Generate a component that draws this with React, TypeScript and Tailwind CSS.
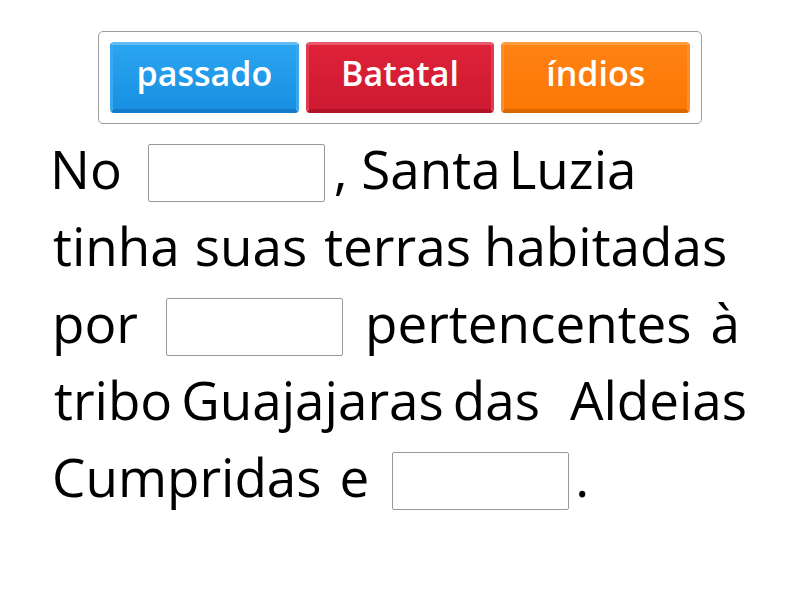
import React from 'react'

function Tile({ label, tone }: { label: string, tone: 'blue' | 'red' | 'orange' }) {
  const tones = {
    blue: 'bg-gradient-to-b from-[#2aa5f0] to-[#1990e2] border-t-[#63bbf3] border-x-[#3aa8ee] border-b-[#137ccb]',
    red: 'bg-gradient-to-b from-[#de2239] to-[#cd1a30] border-t-[#e7596a] border-x-[#e23a4f] border-b-[#b11327]',
    orange: 'bg-gradient-to-b from-[#ff8212] to-[#fb7805] border-t-[#ff9d45] border-x-[#ff8d2a] border-b-[#dc6600]',
  }
  return (
    <div className={`flex h-[71px] w-[189px] items-center justify-center rounded-[4px] border-[3px] border-b-[4px] pb-[7px] text-[34px] font-semibold text-white ${tones[tone]}`}>
      {label}
    </div>
  )
}

function Blank() {
  return <span className="mt-[14px] inline-block h-[58px] w-[177px] shrink-0 rounded-[2px] border border-[#9a9a9a] bg-white" />
}

export default function App() {
  return (
    <div className="h-[600px] w-[800px] bg-white pt-[31px] font-['Open_Sans',sans-serif] text-black">
      <div className="ml-[98px] flex w-[604px] gap-[7px] rounded-[5px] border border-[#9d9d9d] px-[11px] py-[10px]">
        <Tile label="passado" tone="blue" />
        <Tile label="Batatal" tone="red" />
        <Tile label="índios" tone="orange" />
      </div>
      <div className="mt-[6px] whitespace-pre text-[53px] leading-[77px]">
        <div className="flex h-[77px] items-start pl-[50px]">
          <span>No</span>
          <span className="ml-[26px] flex"><Blank /></span>
          <span className="ml-[9px]">, Santa</span>
          <span className="ml-[8px]">Luzia</span>
        </div>
        <div className="flex h-[77px] items-start pl-[53px]">
          <span>tinha</span>
          <span className="ml-[15px]">suas</span>
          <span className="ml-[17px]">terras</span>
          <span className="ml-[13px]">habitadas</span>
        </div>
        <div className="flex h-[77px] items-start pl-[52px]">
          <span>por</span>
          <span className="ml-[28px] flex"><Blank /></span>
          <span className="ml-[22px]">pertencentes</span>
          <span className="ml-[19px]">à</span>
        </div>
        <div className="flex h-[77px] items-start pl-[54px]">
          <span>tribo</span>
          <span className="ml-[9px]">Guajajaras</span>
          <span className="ml-[9px]">das</span>
          <span className="ml-[30px]">Aldeias</span>
        </div>
        <div className="flex h-[77px] items-start pl-[52px]">
          <span>Cumpridas</span>
          <span className="ml-[18px]">e</span>
          <span className="ml-[23px] flex"><Blank /></span>
          <span className="ml-[6px]">.</span>
        </div>
      </div>
    </div>
  )
}
